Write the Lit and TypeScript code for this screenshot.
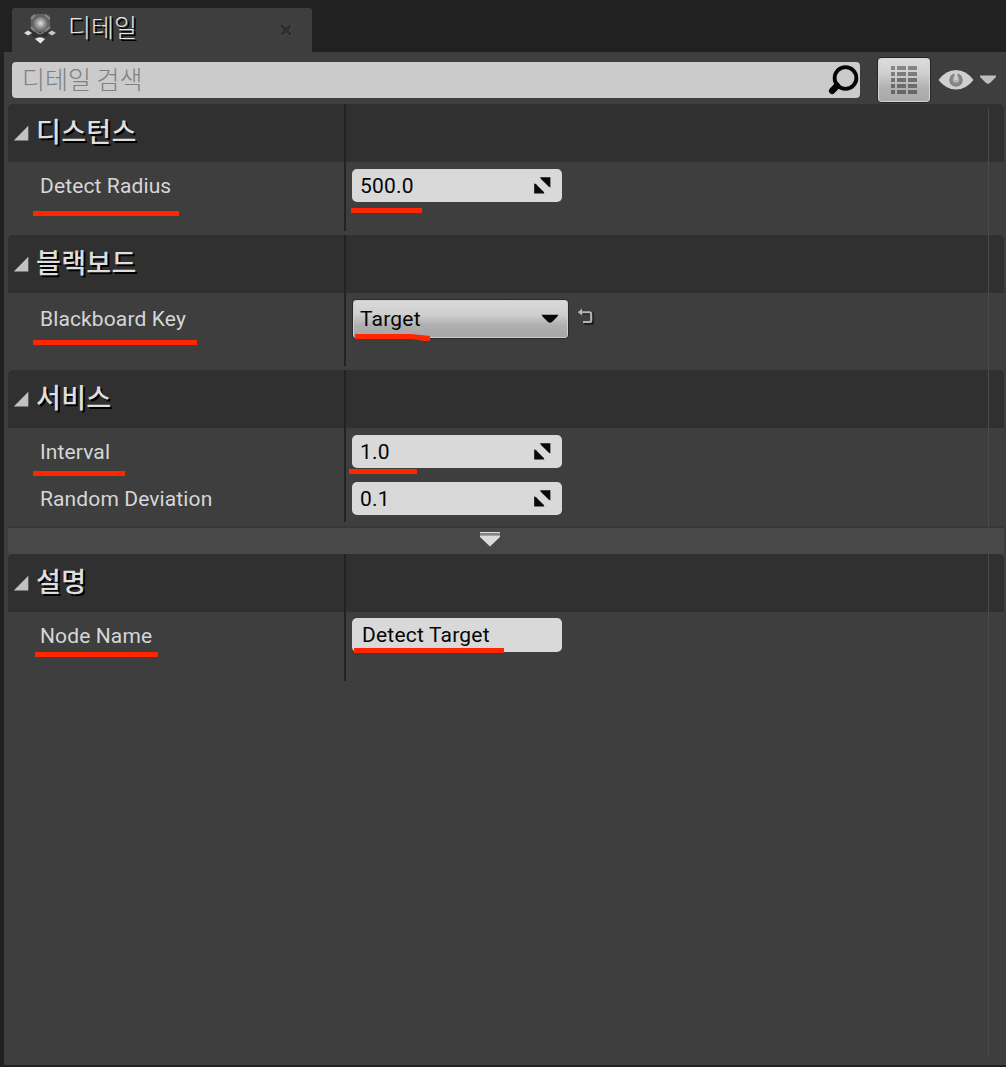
import { LitElement, html, css, svg, nothing } from "lit";
import { customElement, property } from "lit/decorators.js";

type Row = { label: string; value: string; kind: "number" | "select" | "text" };
type Section = { title: string; rows: Row[]; more?: boolean };

const SECTIONS: Section[] = [
  { title: "디스턴스", rows: [{ label: "Detect Radius", value: "500.0", kind: "number" }] },
  { title: "블랙보드", rows: [{ label: "Blackboard Key", value: "Target", kind: "select" }] },
  {
    title: "서비스",
    more: true,
    rows: [
      { label: "Interval", value: "1.0", kind: "number" },
      { label: "Random Deviation", value: "0.1", kind: "number" },
    ],
  },
  { title: "설명", rows: [{ label: "Node Name", value: "Detect Target", kind: "text" }] },
];

/* Red underline strokes: x, y, width of each marker line. */
const MARKS = [
  [33, 211, 146],
  [351, 208, 71],
  [33, 340, 164],
  [33, 471, 92],
  [349, 469, 68],
  [35, 652, 123],
  [354, 648, 150],
];

@customElement("detail-row")
export class DetailRow extends LitElement {
  @property({ attribute: false }) row!: Row;

  static styles = css`
    :host { display: block; }
    .row { display: grid; grid-template-columns: 338px 1fr; height: 47px; }
    .row.select { height: 51px; }
    .label {
      display: flex; align-items: center; padding-left: 32px;
      border-right: 2px solid #232323; color: #d6d6d6; letter-spacing: 0.12px;
    }
    .value { display: flex; align-items: center; padding-left: 6px; color: #060606; }
    .field {
      box-sizing: border-box; width: 210px; height: 33px; border-radius: 5px;
      background: #d9d9d9; display: flex; align-items: center;
      justify-content: space-between; padding: 0 10px 0 8px;
    }
    .field.text { height: 34px; margin-top: -1px; padding-left: 10px; }
    .combo {
      box-sizing: border-box; width: 217px; height: 40px; border-radius: 4px;
      border: 1px solid #2a2a2a; box-shadow: inset 0 0 0 1px #cecece;
      background: linear-gradient(#dadada 0%, #cfcfcf 38%, #aeaeae 68%, #a6a6a6 100%);
      display: flex; align-items: center; justify-content: space-between;
      padding: 0 9px 0 7px;
    }
    .reset { margin: 0 0 3px 8px; }
    svg { display: block; }
  `;

  private control() {
    const { kind, value } = this.row;
    if (kind === "select") {
      return html`<div class="combo">
          <span>${value}</span>
          <svg width="18" height="10" viewBox="0 0 18 10"><path d="M.5 .8H17.5L16 3L11 8Q9 9.6 7 8L2 3Z" fill="#080808" /></svg>
        </div>
        <svg class="reset" width="18" height="18" viewBox="0 0 18 18" fill="none">
          <path d="M5 4.8H15V15H6.5" stroke="#1c1c1c" stroke-width="2" transform="translate(.8 .8)" />
          <path d="M4 4.3H12.4Q14.2 4.3 14.2 6.2V12.2Q14.2 14 12.4 14H6" stroke="#b4b4b4" stroke-width="2.1" />
          <path d="M.8 4.2L5 .6V7.6Z" fill="#b4b4b4" />
        </svg>`;
    }
    return html`<div class="field ${kind}">
      <span>${value}</span>
      ${kind === "number"
        ? html`<svg width="18" height="18" viewBox="0 0 18 18" fill="#0a0a0a">
            <path d="M6 .2H16.4V10.4L14.6 9.6L7 2Z" /><path d="M.2 6.2L2 7.2L9.6 14.8L10.4 16.6H.2Z" />
          </svg>`
        : nothing}
    </div>`;
  }

  render() {
    return html`<div class="row ${this.row.kind}">
      <div class="label">${this.row.label}</div>
      <div class="value">${this.control()}</div>
    </div>`;
  }
}

@customElement("detail-section")
export class DetailSection extends LitElement {
  @property({ attribute: false }) section!: Section;

  static styles = css`
    :host { display: block; }
    .head {
      display: grid; grid-template-columns: 338px 1fr; height: 58px;
      background: #303030; border-radius: 5px 5px 0 0;
    }
    .title {
      display: flex; align-items: center; border-right: 2px solid #222;
      padding-left: 5px; gap: 7px;
    }
    .name {
      font: 500 27px/40px "Noto Sans CJK KR", sans-serif; color: #dedede;
      text-shadow: 2px 2px 0 #000; letter-spacing: 0.3px; padding-bottom: 4px;
    }
    .tail { display: grid; grid-template-columns: 338px 1fr; height: 22px; }
    .tail i { border-right: 2px solid #232323; }
    .gap { height: 4px; }
    .more {
      box-sizing: border-box; height: 28px; border-top: 2px solid #373737;
      background: #484848; display: flex; justify-content: center; padding: 3px 32px 0 0;
    }
    svg { display: block; }
  `;

  render() {
    const s = this.section;
    return html`
      <div class="head">
        <div class="title">
          <svg width="16" height="16" viewBox="0 0 16 16"><path d="M15.3 .8V15.5H.8Z" fill="#c2c2c2" /></svg>
          <span class="name">${s.title}</span>
        </div>
      </div>
      ${s.rows.map((r) => html`<detail-row .row=${r}></detail-row>`)}
      ${s.more ? nothing : html`<div class="tail"><i></i></div>`}
      <div class="gap"></div>
      ${s.more
        ? html`<div class="more">
            <svg width="20" height="16" viewBox="0 0 20 16">
              <path d="M0 1H20V2.4H0Z" fill="#dcdcdc" /><path d="M0 2.4H20V4.6H0Z" fill="#858585" />
              <path d="M0 4.6H20V6L10 15.5L0 6Z" fill="#dcdcdc" />
            </svg>
          </div>`
        : nothing}
    `;
  }
}

@customElement("app-root")
export class AppRoot extends LitElement {
  static styles = css`
    :host {
      display: block; position: relative; width: 1006px; height: 1067px; overflow: hidden;
      background: #212121; font: 21px/28px Roboto, sans-serif; letter-spacing: 0.2px;
    }
    .tabs { height: 44px; padding: 8px 0 0 12px; box-sizing: content-box; }
    .tab {
      box-sizing: border-box; width: 300px; height: 44px; border-radius: 3px 3px 0 0;
      background: #3e3e3e; display: flex; align-items: center; padding: 0 19px 0 11px;
    }
    .tab-name {
      flex: 1; margin-left: 11px; padding-bottom: 8px;
      font: 300 25px/36px "Noto Sans CJK KR", sans-serif;
      letter-spacing: 0; color: #e4e4e4; text-shadow: 2px 2px 0 #000;
    }
    .panel { box-sizing: border-box; height: 1013px; margin-left: 4px; background: #3e3e3e; padding: 5px 2px 0 4px; }
    .toolbar { display: flex; align-items: center; height: 47px; padding-left: 4px; }
    .search {
      box-sizing: border-box; width: 848px; height: 36px; margin-bottom: 1px; border-radius: 4px; background: #cbcbcb;
      display: flex; align-items: center; justify-content: space-between; padding: 0 0 0 10px;
      font: 300 25px/36px "Noto Sans CJK KR", sans-serif; letter-spacing: 0; color: #808080;
    }
    .hint { padding-bottom: 4px; }
    .tool { margin-bottom: 2px; }
    .grid-btn {
      box-sizing: border-box; width: 54px; height: 46px; margin: 0 7px 2px 17px;
      border: 1px solid #242424; border-radius: 4px; box-shadow: inset 0 0 0 1px #d6d6d6;
      background: linear-gradient(#dcdcdc, #cfcfcf 35%, #b0b0b0 70%, #a8a8a8);
      display: grid; place-items: center;
    }
    .caret { margin-left: 6px; }
    .overlay { position: absolute; left: 0; top: 0; pointer-events: none; }
    svg { display: block; }
  `;

  render() {
    return html`
      <div class="tabs">
        <div class="tab">
          <svg class="tab-icon" width="34" height="34" viewBox="0 0 34 34">
            <defs>
              <radialGradient id="ball" cx=".5" cy=".45" r=".6">
                <stop offset="0" stop-color="#e0e0e0" /><stop offset=".5" stop-color="#979797" /><stop offset="1" stop-color="#5c5c5c" />
              </radialGradient>
            </defs>
            <path d="M8 3L12 1H23L27 3V15L22 20H12L8 15Z" fill="#626262" />
            <path d="M8 6L12 2M22 2L27 6M8 14L12 18M27 14L22 18" stroke="#868686" stroke-width="2" />
            <circle cx="17.5" cy="11" r="7" fill="url(#ball)" />
            <path d="M7 18L12 19H23L27 18L24 24H10Z" fill="#303030" />
            <path d="M13 19L17 21L21 19" stroke="#777" stroke-width="1.5" fill="none" />
            <path d="M1 20L5 17.5L9 20L5 22.5Z" fill="#dcdcdc" /><path d="M33 20L29 17.5L25 20L29 22.5Z" fill="#c8c8c8" />
            <path d="M12 26Q17 22.5 22 26L17.5 30.5Z" fill="#e6e6e6" />
          </svg>
          <span class="tab-name">디테일</span>
          <svg width="14" height="14" viewBox="0 0 14 14">
            <path d="M1 1H4L7 4L10 1H13V4L10 7L13 10V13H10L7 10L4 13H1V10L4 7L1 4Z" fill="#2f2f2f" stroke="#4a4a4a" stroke-width="1" />
          </svg>
        </div>
      </div>
      <div class="panel">
        <div class="toolbar">
          <div class="search">
            <span class="hint">디테일 검색</span>
            <svg width="32" height="32" viewBox="0 0 32 32" fill="none" stroke="#050505">
              <circle cx="17.5" cy="14" r="10.9" stroke-width="3.8" />
              <path d="M9 21.8L4.2 26.8" stroke-width="6.5" stroke-linecap="round" />
            </svg>
          </div>
          <div class="grid-btn">
            <svg width="28" height="30" viewBox="0 0 28 30">
              ${[0, 6, 12, 18, 24].map(
                (y, i) => svg`<path d="M1 ${y + 1}h4v4h-4zM7 ${y + 1}h9v4h-9zM18 ${y + 1}h9v4h-9z" fill=${["#858585", "#7c7c7c", "#707070", "#6b6b6b", "#666"][i]} />`,
              )}
            </svg>
          </div>
          <svg class="tool" width="36" height="22" viewBox="0 0 36 22">
            <path d="M.5 11Q8 1 18 1T35.5 11Q28 20.5 18 20.5T.5 11Z" fill="#cfcfcf" />
            <circle cx="18" cy="11" r="6.8" fill="#858585" />
            <circle cx="18" cy="10.5" r="3.2" fill="#b4b4b4" />
            <path d="M16.5 4H19.5V11H16.5Z" fill="#cfcfcf" />
          </svg>
          <svg class="caret tool" width="16" height="10" viewBox="0 0 16 10"><path d="M0 .5H16V2L10 8Q8 9.5 6 8L0 2Z" fill="#bdbdbd" /></svg>
        </div>
        ${SECTIONS.map((s) => html`<detail-section .section=${s}></detail-section>`)}
      </div>
      <svg class="overlay" width="1006" height="1067" viewBox="0 0 1006 1067">
        <path d="M988.5 108V1057" stroke="#4a4a4a" stroke-width="1" />
        ${MARKS.map(([x, y, w]) => svg`<rect x=${x} y=${y} width=${w} height="5" fill="#ff2600" />`)}
        <path d="M355 334H411L421 335L430 336V341H424L412 339H355Z" fill="#ff2600" />
      </svg>
    `;
  }
}
